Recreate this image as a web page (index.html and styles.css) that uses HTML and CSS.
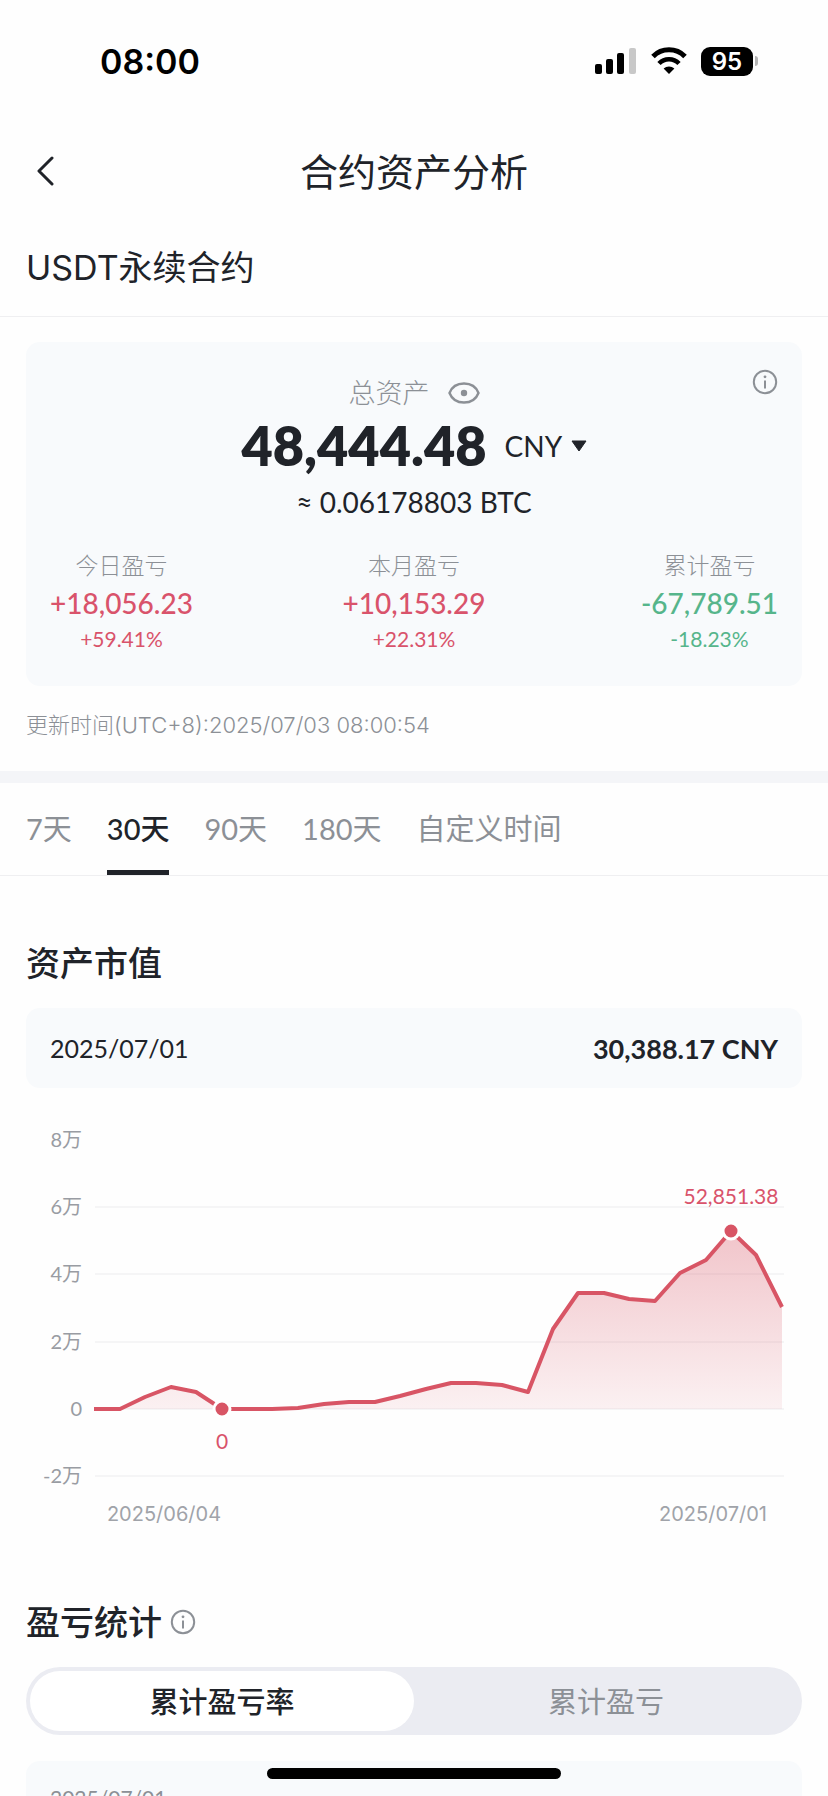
FILE: index.html
```html
<!DOCTYPE html>
<html lang="zh-CN">
<head>
    <meta charset="UTF-8">
    <meta name="viewport" content="width=device-width, initial-scale=1.0">
    <title>合约资产分析</title>
    <link rel="stylesheet" href="styles.css">
</head>
<body>

<div class="app">
    <div class="status-bar">
        <span class="status-time">08:00</span>
        <div class="status-icons">
            <svg width="42" height="28" viewBox="0 0 42 28" aria-hidden="true">
                <rect x="0" y="17" width="7" height="10" rx="2"/>
                <rect x="11" y="12" width="7" height="15" rx="2"/>
                <rect x="22" y="6" width="7" height="21" rx="2"/>
                <rect x="34" y="1" width="7" height="26" rx="2" fill="#c8c8c8"/>
            </svg>
            <svg width="36" height="28" viewBox="0 0 36 28" aria-hidden="true">
                <path d="M2 9.500a22.500 22.500 0 0 1 32 0" fill="none" stroke="#000" stroke-width="5"/>
                <path d="M8 16.500a14 14 0 0 1 20 0" fill="none" stroke="#000" stroke-width="4.600"/>
                <path d="M18 27l-5.400-5.400a8 8 0 0 1 10.800 0z"/>
            </svg>
            <div class="battery"><span class="battery-level">95</span></div>
        </div>
    </div>

    <header class="navbar">
        <button type="button" class="back" aria-label="返回">
            <svg width="18" height="30" viewBox="0 0 18 30" aria-hidden="true">
                <path d="M16 2L3 15l13 13" fill="none" stroke="#202329" stroke-width="3" stroke-linecap="round" stroke-linejoin="round"/>
            </svg>
        </button>
        <h1>合约资产分析</h1>
    </header>

    <main class="content">
        <h2 class="contract-type">USDT永续合约</h2>

        <section class="overview">
            <div class="card">
                <button type="button" class="info-button card-info" aria-label="说明">
                    <svg width="26" height="26" viewBox="0 0 26 26" aria-hidden="true">
                        <circle cx="13" cy="13" r="11.2" fill="none" stroke="#8c9096" stroke-width="2"/>
                        <circle cx="13" cy="7.8" r="1.4" fill="#8c9096"/>
                        <path d="M13 11.5v8" stroke="#8c9096" stroke-width="2"/>
                    </svg>
                </button>
                <div class="total-label">
                    <span>总资产</span>
                    <button type="button" class="info-button" aria-label="隐藏金额">
                        <svg width="32" height="24" viewBox="0 0 32 24" aria-hidden="true">
                            <path d="M1.5 12C4 5.500 10 2.500 16 2.500S28 5.500 30.500 12C28 18.500 22 21.500 16 21.500S4 18.500 1.500 12z" fill="none" stroke="#8c9096" stroke-width="2.400"/>
                            <circle cx="16" cy="12" r="3.200" fill="#8c9096"/>
                        </svg>
                    </button>
                </div>
                <div class="amount-row">
                    <strong class="amount">48,444.48</strong>
                    <label class="currency">
                        <select aria-label="计价货币">
                            <option>CNY</option>
                        </select>
                        <svg width="16" height="12" viewBox="0 0 16 12" aria-hidden="true">
                            <path d="M1 1h14L8 11z" fill="#202329" stroke="#202329" stroke-linejoin="round"/>
                        </svg>
                    </label>
                </div>
                <div class="btc">≈ 0.06178803 BTC</div>
                <div class="stats">
                    <div class="stat up">
                        <span class="stat-label">今日盈亏</span>
                        <span class="stat-value">+18,056.23</span>
                        <span class="stat-rate">+59.41%</span>
                    </div>
                    <div class="stat up">
                        <span class="stat-label">本月盈亏</span>
                        <span class="stat-value">+10,153.29</span>
                        <span class="stat-rate">+22.31%</span>
                    </div>
                    <div class="stat down">
                        <span class="stat-label">累计盈亏</span>
                        <span class="stat-value">-67,789.51</span>
                        <span class="stat-rate">-18.23%</span>
                    </div>
                </div>
            </div>
            <p class="update-time">更新时间(UTC+8):2025/07/03 08:00:54</p>
        </section>

        <nav class="tabs">
            <button type="button">7天</button>
            <button type="button" class="active">30天</button>
            <button type="button">90天</button>
            <button type="button">180天</button>
            <button type="button">自定义时间</button>
        </nav>

        <section class="section">
            <h3>资产市值</h3>
            <div class="value-bar">
                <span>2025/07/01</span>
                <strong>30,388.17 CNY</strong>
            </div>
            <svg class="chart" viewBox="0 0 776 440" role="img" aria-label="资产市值走势">
                <defs>
                    <linearGradient id="area" x1="0" y1="0" x2="0" y2="1">
                        <stop offset="0" stop-color="#d85565" stop-opacity="0.34"/>
                        <stop offset="1" stop-color="#d85565" stop-opacity="0.08"/>
                    </linearGradient>
                </defs>
                <g class="grid">
                    <path d="M69 106h689M69 173h689M69 241h689M69 308h689M69 375h689"/>
                </g>
                <g class="axis-y">
                    <text x="56" y="46">8万</text>
                    <text x="56" y="113">6万</text>
                    <text x="56" y="180">4万</text>
                    <text x="56" y="248">2万</text>
                    <text x="56" y="315">0</text>
                    <text x="56" y="382">-2万</text>
                </g>
                <path fill="url(#area)" d="M68 308L94 308L119 296L145 286L170 291L196 308L246 308L272 307L298 303L323 301L349 301L374 295L400 288L425 282L450 282L476 284L502 291L527 228L552 192L578 192L603 198L629 200L654 172L680 159L705 130L730 154L756 206V308z"/>
                <polyline class="line" points="68,308 94,308 119,296 145,286 170,291 196,308 246,308 272,307 298,303 323,301 349,301 374,295 400,288 425,282 450,282 476,284 502,291 527,228 552,192 578,192 603,198 629,200 654,172 680,159 705,130 730,154 756,206"/>
                <circle class="dot" cx="196" cy="308" r="8"/>
                <circle class="dot" cx="705" cy="130" r="8"/>
                <text class="mark" x="196" y="348">0</text>
                <text class="mark" x="705" y="103">52,851.38</text>
                <text class="axis-x" x="138" y="420">2025/06/04</text>
                <text class="axis-x" x="687" y="420">2025/07/01</text>
            </svg>
        </section>

        <section class="section">
            <h3>盈亏统计
                <button type="button" class="info-button" aria-label="说明">
                    <svg width="26" height="26" viewBox="0 0 26 26" aria-hidden="true">
                        <circle cx="13" cy="13" r="11.2" fill="none" stroke="#8c9096" stroke-width="2"/>
                        <circle cx="13" cy="7.8" r="1.4" fill="#8c9096"/>
                        <path d="M13 11.5v8" stroke="#8c9096" stroke-width="2"/>
                    </svg>
                </button>
            </h3>
            <div class="switcher">
                <button type="button" class="active">累计盈亏率</button>
                <button type="button">累计盈亏</button>
            </div>
            <div class="card rate-card">2025/07/01</div>
        </section>
    </main>

    <div class="home-indicator"></div>
</div>

</body>
</html>
```
FILE: styles.css
```css
* {
    box-sizing: border-box;
}

body {
    margin: 0;
    background-color: #fefefe;
    color: #202329;
    font-family: Lato, "Noto Sans CJK SC", sans-serif;
}

h1, h2, h3, p {
    margin: 0;
    font-weight: 400;
}

button, select {
    border: none;
    padding: 0;
    background: none;
    color: inherit;
    font: inherit;
    cursor: pointer;
}

svg {
    display: block;
    flex-shrink: 0;
}

.app {
    display: flex;
    flex-direction: column;
    height: 100vh;
    overflow: hidden;
}

/* status bar */
.status-bar {
    display: flex;
    flex-shrink: 0;
    justify-content: space-between;
    align-items: center;
    height: 122px;
    padding: 0 70px 0 100px;
    color: #000;
    font-family: Inter, sans-serif;
    font-weight: 600;
}

.status-time {
    font-size: 34px;
}

.status-icons {
    display: flex;
    align-items: center;
    gap: 14px;
}

.battery {
    display: flex;
    align-items: center;
    gap: 2px;
}

.battery::after {
    content: "";
    width: 3px;
    height: 10px;
    border-radius: 0 3px 3px 0;
    background-color: #b5b5b5;
}

.battery-level {
    width: 52px;
    border-radius: 9px;
    background-color: #000;
    color: #fff;
    font-size: 24px;
    line-height: 29px;
    text-align: center;
}

/* header */
.navbar {
    display: grid;
    grid-template-columns: 60px 1fr 60px;
    flex-shrink: 0;
    align-items: center;
    height: 98px;
    padding: 0 26px;
}

.back {
    justify-self: start;
    padding: 10px;
}

.navbar h1 {
    font-size: 38px;
    line-height: 56px;
    text-align: center;
}

.content {
    flex: 1;
    min-height: 0;
    overflow-y: auto;
    scrollbar-width: none;
}

.contract-type {
    padding: 0 26px;
    border-bottom: 1px solid #efeff1;
    font-family: Inter, "Noto Sans CJK SC", sans-serif;
    font-size: 34px;
    line-height: 96px;
}

/* overview */
.overview {
    padding: 25px 26px 26px;
    border-bottom: 12px solid #f4f5f8;
}

.card {
    position: relative;
    padding: 30px 24px;
    border-radius: 14px;
    background-color: #f8fafc;
}

.info-button {
    display: inline-flex;
    color: #8c9096;
}

.card-info {
    position: absolute;
    top: 27px;
    right: 24px;
}

.total-label {
    display: flex;
    justify-content: center;
    align-items: center;
    gap: 18px;
    color: #8c9096;
    font-size: 27px;
    font-weight: 300;
    line-height: 42px;
}

.amount-row {
    display: flex;
    justify-content: center;
    align-items: center;
    gap: 18px;
    line-height: 64px;
}

.amount {
    font-size: 54px;
    font-weight: 800;
}

.currency {
    display: flex;
    align-items: center;
    gap: 8px;
    font-size: 28px;
}

.currency select {
    appearance: none;
}

.btc {
    font-size: 28px;
    line-height: 48px;
    text-align: center;
}

.stats {
    display: grid;
    grid-template-columns: 1fr auto 1fr;
    margin-top: 20px;
}

.stat {
    display: flex;
    flex-direction: column;
    align-items: center;
    justify-self: center;
}

.stat:first-child {
    justify-self: start;
}

.stat:last-child {
    justify-self: end;
}

.stat-label {
    color: #8c9096;
    font-size: 23px;
    font-weight: 300;
    line-height: 38px;
}

.stat-value {
    font-size: 28px;
    font-weight: 500;
    line-height: 38px;
}

.stat-rate {
    font-size: 21px;
    line-height: 34px;
}

.up {
    color: #d9536b;
}

.down {
    color: #56b58b;
}

.update-time {
    margin-top: 19px;
    color: #8c9096;
    font-family: Inter, "Noto Sans CJK SC", sans-serif;
    font-size: 22px;
    font-weight: 300;
    line-height: 40px;
}

/* period tabs */
.tabs {
    display: flex;
    gap: 35px;
    height: 93px;
    padding: 0 26px;
    border-bottom: 1px solid #efeff1;
    color: #8c9096;
    font-size: 29px;
}

.tabs button {
    border-bottom: 5px solid transparent;
}

.tabs .active {
    border-bottom-color: #202329;
    color: #202329;
    font-weight: 500;
}

/* sections */
.section {
    padding: 64px 26px 0;
}

.section + .section {
    padding-top: 58px;
}

.section h3 {
    display: flex;
    align-items: center;
    gap: 8px;
    margin-bottom: 22px;
    font-size: 34px;
    font-weight: 500;
    line-height: 46px;
}

.value-bar {
    display: flex;
    justify-content: space-between;
    align-items: center;
    height: 80px;
    padding: 0 24px;
    border-radius: 14px;
    background-color: #f8fafc;
    font-size: 25px;
}

.value-bar strong {
    font-size: 27px;
    font-weight: 700;
}

/* chart */
.chart {
    width: 100%;
    height: auto;
    margin-top: 13px;
}

.grid {
    stroke: #f5f5f6;
    stroke-width: 2;
}

.axis-y {
    fill: #999ca3;
    font-size: 20px;
    text-anchor: end;
}

.axis-x {
    fill: #a0a3a9;
    font-family: Inter, sans-serif;
    font-size: 20px;
    text-anchor: middle;
}

.line {
    fill: none;
    stroke: #d85565;
    stroke-width: 4;
    stroke-linejoin: round;
}

.dot {
    fill: #d85565;
    stroke: #fff;
    stroke-width: 3;
}

.mark {
    fill: #d9536b;
    font-size: 21px;
    text-anchor: middle;
}

/* segmented switch */
.switcher {
    display: flex;
    height: 68px;
    padding: 4px;
    border-radius: 34px;
    background-color: #ebecf2;
    color: #8c9096;
    font-size: 29px;
}

.switcher button {
    flex: 1;
    padding-bottom: 3px;
    border-radius: 30px;
}

.switcher .active {
    background-color: #fff;
    color: #202329;
    font-weight: 500;
}

.rate-card {
    height: 343px;
    margin-top: 26px;
    padding-top: 22px;
    color: #8c9096;
    font-size: 21px;
    line-height: 30px;
}

.home-indicator {
    position: fixed;
    bottom: 17px;
    left: 50%;
    width: 294px;
    height: 11px;
    margin-left: -147px;
    border-radius: 6px;
    background-color: #000;
}
```
